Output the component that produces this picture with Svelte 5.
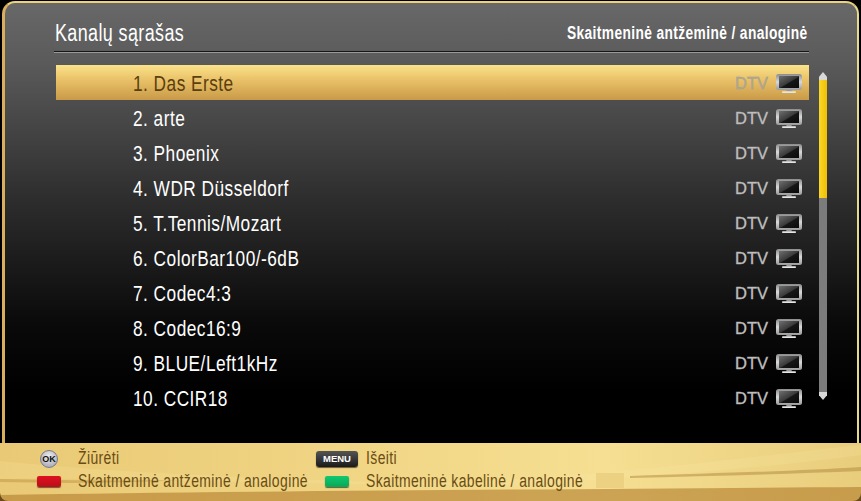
<script>
  const channels = [
    '1. Das Erste',
    '2. arte',
    '3. Phoenix',
    '4. WDR Düsseldorf',
    '5. T.Tennis/Mozart',
    '6. ColorBar100/-6dB',
    '7. Codec4:3',
    '8. Codec16:9',
    '9. BLUE/Left1kHz',
    '10. CCIR18'
  ];
</script>

<div class="screen">
  <div class="panel">
    <header class="header">
      <h1 class="title">Kanalų sąrašas</h1>
      <span class="source">Skaitmeninė antžeminė / analoginė</span>
    </header>
    <div class="body">
      <ul class="list">
        {#each channels as name, i}
          <li class="row" class:selected={i === 0}>
            <span class="name">{name}</span>
            <span class="dtv">DTV</span>
            <svg class="tv" width="26" height="19" viewBox="0 0 26 19">
              <defs>
                <linearGradient id="bezel{i}" x1="0" y1="0" x2="0" y2="1">
                  <stop offset="0" stop-color="#8c8c8c" />
                  <stop offset="0.5" stop-color="#d8d8d8" />
                  <stop offset="1" stop-color="#9a9a9a" />
                </linearGradient>
                <linearGradient id="glass{i}" x1="0" y1="0" x2="1" y2="1">
                  <stop offset="0" stop-color="#707070" />
                  <stop offset="0.5" stop-color="#3a3a3a" />
                  <stop offset="0.55" stop-color="#161616" />
                  <stop offset="1" stop-color="#0a0a0a" />
                </linearGradient>
              </defs>
              <rect x="0" y="0" width="26" height="16" rx="2.5" fill="url(#bezel{i})" />
              <rect x="3" y="2" width="20" height="12" fill="url(#glass{i})" />
              <path d="M10.5 16h5l.5 1.5h-6z" fill="#999" />
              <rect x="6" y="17.3" width="14" height="1.7" rx="0.8" fill="#e4e4e4" />
            </svg>
          </li>
        {/each}
      </ul>
      <div class="scrollbar">
        <span class="arrow up"></span>
        <div class="track"><div class="thumb"></div></div>
        <span class="arrow down"></span>
      </div>
    </div>
  </div>

  <footer class="footer">
    <svg class="streaks" width="861" height="58" viewBox="0 0 861 58">
      <path d="M0 18C120 30 260 36 420 40C600 36 760 12 861 2V12C760 26 640 34 520 42C340 44 150 34 0 36Z" fill="#fbeaa6" opacity="0.22" />
      <path d="M0 36C60 37 110 38 180 37C100 41 50 40 0 39Z" fill="#b98d3e" opacity="0.45" />
      <path d="M630 33C720 30 800 28 861 24V28C790 31 710 33 630 35Z" fill="#a97f38" opacity="0.45" />
      <path d="M0 52C250 48 600 46 861 44V58H0Z" fill="#b17b2c" opacity="0.6" />
    </svg>
    <span class="patch"></span>
    <div class="legend">
      <span class="key"><span class="ok">OK</span></span>
      <span class="label left">Žiūrėti</span>
      <span class="key"><span class="menu">MENU</span></span>
      <span class="label right">Išeiti</span>
      <span class="key"><span class="btn red"></span></span>
      <span class="label left">Skaitmeninė antžeminė / analoginė</span>
      <span class="key"><span class="btn green"></span></span>
      <span class="label right">Skaitmeninė kabelinė / analoginė</span>
    </div>
  </footer>
</div>

<style>
  :global(body) {
    margin: 0;
    background: #000;
  }
  .screen {
    width: 861px;
    height: 501px;
    display: flex;
    flex-direction: column;
    overflow: hidden;
    font-family: "Liberation Sans", sans-serif;
  }
  .panel {
    height: 442px;
    box-sizing: border-box;
    margin: 1px 2px 0 2px;
    padding: 0 48px 0 49px;
    border: solid #d9ae5c;
    border-width: 2px 2px 0 3px;
    border-top-color: #ecd27a;
    border-right-color: #e6d98a;
    border-radius: 13px 13px 0 0;
    background: linear-gradient(#686868 0, #5a5a5a 60px, #2c2c2c 200px, #0a0a0a 320px, #000 390px);
  }
  .header {
    height: 49px;
    box-sizing: border-box;
    display: flex;
    justify-content: space-between;
    align-items: center;
    padding: 12px 1px 0;
    border-bottom: 1px solid #151515;
    box-shadow: 0 1px 0 #999;
  }
  .title {
    margin: 0;
    font-size: 23px;
    font-weight: 400;
    letter-spacing: 0.5px;
    color: #fff;
    white-space: nowrap;
    transform: scaleX(0.78);
    transform-origin: left center;
  }
  .source {
    font-size: 18px;
    font-weight: 700;
    letter-spacing: 0.5px;
    color: #fff;
    white-space: nowrap;
    transform: scaleX(0.765);
    transform-origin: right center;
  }
  .body {
    display: flex;
    margin-top: 13px;
  }
  .list {
    flex: 1;
    margin: 0 0 0 2px;
    padding: 0;
    list-style: none;
  }
  .row {
    height: 35px;
    box-sizing: border-box;
    display: flex;
    align-items: center;
    padding: 0 7px 0 77px;
    color: #fff;
    font-size: 22px;
  }
  .row.selected {
    background: linear-gradient(#fbe38a, #e8bf66 45%, #c99a48);
    color: #5a3f10;
  }
  .name {
    flex: 1;
    padding-top: 2px;
    letter-spacing: 0.6px;
    white-space: nowrap;
    transform: scaleX(0.785);
    transform-origin: left center;
  }
  .dtv {
    font-size: 16.5px;
    color: #c6c6c6;
    -webkit-text-stroke: 0.4px #aaa;
    margin-right: 8px;
    padding-top: 2px;
  }
  .selected .dtv {
    color: #b4ac94;
    -webkit-text-stroke: 0.4px #9c9a8c;
  }
  .tv {
    display: block;
    margin-top: 2px;
  }
  .scrollbar {
    width: 8px;
    margin-left: 10px;
    margin-right: -18px;
    margin-top: 7px;
    display: flex;
    flex-direction: column;
    height: 328px;
  }
  .arrow {
    width: 8px;
    height: 8px;
    background: #d8d8d8;
    flex: none;
  }
  .arrow.up {
    clip-path: polygon(50% 0, 100% 60%, 100% 100%, 0 100%, 0 60%);
  }
  .arrow.down {
    clip-path: polygon(0 0, 100% 0, 100% 40%, 50% 100%, 0 40%);
  }
  .track {
    flex: 1;
    background: #7c7c7c;
  }
  .thumb {
    height: 118px;
    background: linear-gradient(90deg, #f9d82a, #f0bf00);
  }
  .footer {
    position: relative;
    flex: 1;
    background: linear-gradient(90deg, #e9c975, #f0d584 40%, #f6df92 70%, #e8cd7c);
    border-radius: 0 0 8px 8px;
  }
  .streaks {
    position: absolute;
    left: 0;
    top: 0;
  }
  .patch {
    position: absolute;
    left: 596px;
    top: 30px;
    width: 28px;
    height: 15px;
    background: #ecd182;
  }
  .legend {
    position: relative;
    display: grid;
    grid-template-columns: 24px 255px 42px 1fr;
    grid-auto-rows: 23px;
    padding: 4px 0 0 37px;
    align-items: center;
  }
  .label {
    display: block;
    font-size: 18px;
    letter-spacing: 0.5px;
    color: #6a4c14;
    white-space: nowrap;
    transform: scaleX(0.775);
    transform-origin: left center;
  }
  .label.left {
    margin-left: 17px;
  }
  .label.right {
    margin-left: 8px;
  }
  .key {
    display: flex;
    justify-content: center;
  }
  .ok {
    width: 18px;
    height: 18px;
    flex: none;
    border-radius: 50%;
    background: radial-gradient(circle at 50% 35%, #f0f0f0, #9a9aa8);
    border: 1px solid #7a7a90;
    box-sizing: border-box;
    color: #111;
    font: 700 9px/16px "Liberation Sans", sans-serif;
    text-align: center;
  }
  .menu {
    width: 42px;
    height: 16px;
    flex: none;
    border-radius: 3px;
    background: linear-gradient(#555, #1a1a1a);
    color: #fff;
    font: 700 9.5px/15px "Liberation Sans", sans-serif;
    text-align: center;
    box-shadow: 0 1px 1px #6b5a30;
  }
  .btn {
    width: 24px;
    height: 11px;
    flex: none;
    border-radius: 2px;
    box-shadow: 0 1px 1px #6b5a30;
  }
  .red {
    background: linear-gradient(#e01020, #b8101a);
  }
  .green {
    background: linear-gradient(#10c870, #08a858);
  }
</style>
